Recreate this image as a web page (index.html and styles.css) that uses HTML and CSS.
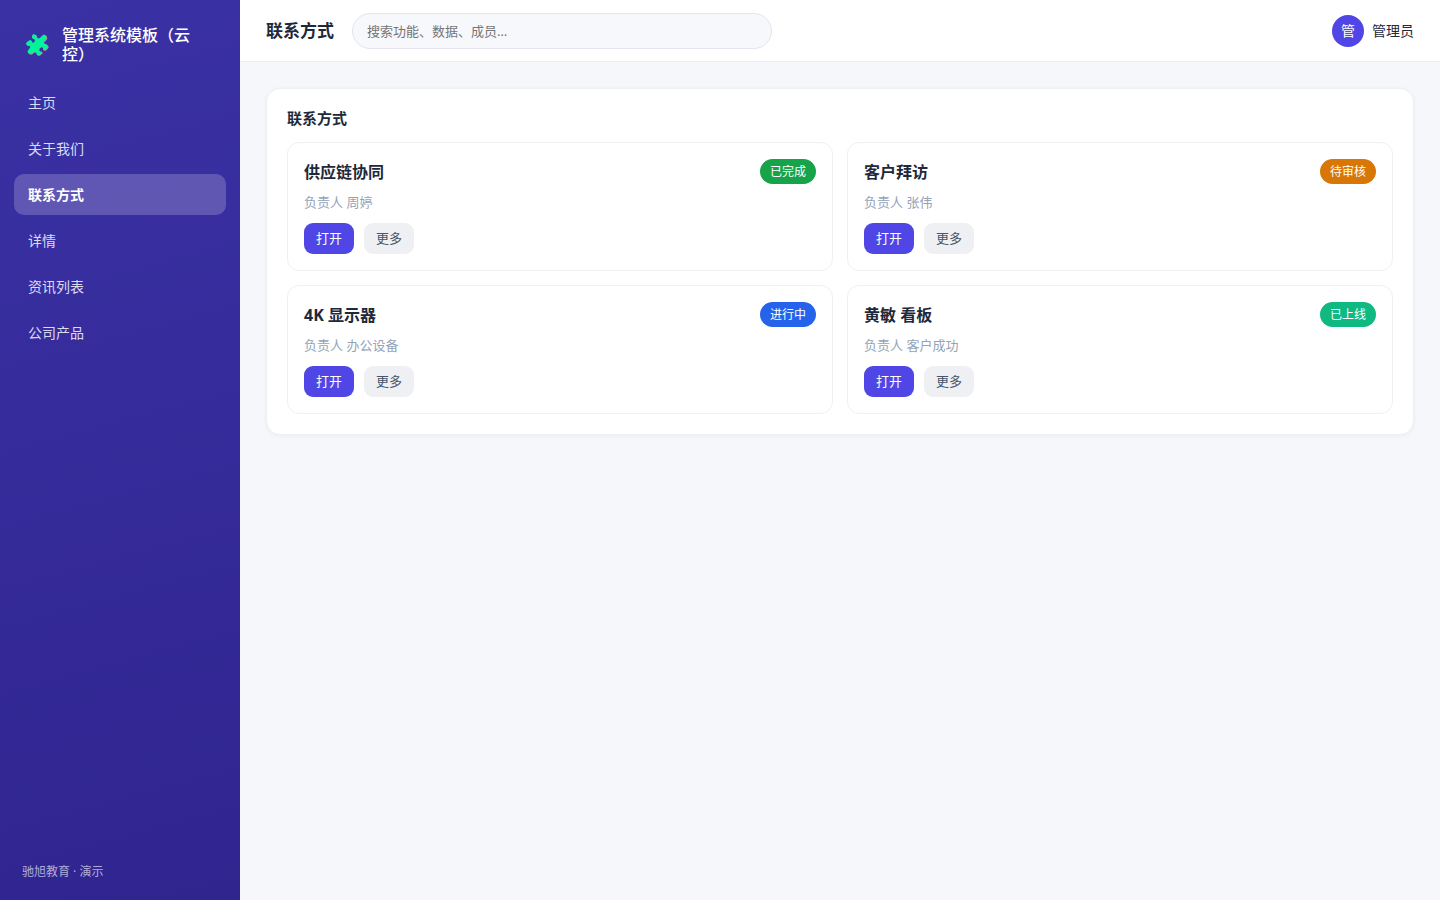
FILE: index.html
```html
<!DOCTYPE html>
<html lang="zh-CN">
<head>
<meta charset="utf-8">
<meta name="viewport" content="width=device-width, initial-scale=1">
<title>联系方式</title>
<link rel="stylesheet" href="styles.css">
</head>
<body>
<div class="app">
  <aside class="sidebar">
    <div class="brand">
      <svg class="brand-icon" viewBox="0 0 24 24" aria-hidden="true">
        <path fill="#b09a8c" transform="translate(.8 .8)" d="M7 2.5 8.5 1 11 2 12 5 14 5.5 17 3 18.5 1.5 21 2.5 21.5 5 20 7 18 9 19 10.500 21 11 23 13 22.500 14.500 20 17 18 17 18 14.500 16 13.500 14 14.500 13.500 17 15 18.500 17 18.500 16.500 20 14 22 12 22 11 19.500 9 18.500 6.500 20.500 5 21 3 20 2.500 18 4.500 15.500 5.500 13.500 4 12.500 1.500 12 1 10 4 7.500 6 7 6.500 9.500 9 9.500 10 8 9.500 6 7 5Z"/>
        <path fill="#00f59b" d="M7 2.5 8.500 1 11 2 12 5 14 5.500 17 3 18.500 1.500 21 2.500 21.500 5 20 7 18 9 19 10.500 21 11 23 13 22.500 14.500 20 17 18 17 18 14.500 16 13.500 14 14.500 13.500 17 15 18.500 17 18.500 16.500 20 14 22 12 22 11 19.500 9 18.500 6.500 20.500 5 21 3 20 2.500 18 4.500 15.500 5.500 13.500 4 12.500 1.500 12 1 10 4 7.500 6 7 6.500 9.500 9 9.500 10 8 9.500 6 7 5Z"/>
      </svg>
      <span class="brand-name">管理系统模板（云控）</span>
    </div>
    <nav class="nav">
      <a href="#">主页</a>
      <a href="#">关于我们</a>
      <a href="#" class="active" aria-current="page">联系方式</a>
      <a href="#">详情</a>
      <a href="#">资讯列表</a>
      <a href="#">公司产品</a>
    </nav>
    <div class="side-foot">驰旭教育 · 演示</div>
  </aside>
  <div class="body">
    <header class="topbar">
      <h1 class="page-title">联系方式</h1>
      <input class="search" type="search" aria-label="搜索" placeholder="搜索功能、数据、成员…">
      <div class="user"><span class="avatar">管</span><span>管理员</span></div>
    </header>
    <main class="main">
      <section class="panel">
        <h2 class="panel-title">联系方式</h2>
        <div class="grid">
          <article class="card">
            <div class="card-head"><h3>供应链协同</h3><span class="badge done">已完成</span></div>
            <p class="owner">负责人 周婷</p>
            <div class="actions"><button class="btn primary">打开</button><button class="btn">更多</button></div>
          </article>
          <article class="card">
            <div class="card-head"><h3>客户拜访</h3><span class="badge review">待审核</span></div>
            <p class="owner">负责人 张伟</p>
            <div class="actions"><button class="btn primary">打开</button><button class="btn">更多</button></div>
          </article>
          <article class="card">
            <div class="card-head"><h3>4K 显示器</h3><span class="badge doing">进行中</span></div>
            <p class="owner">负责人 办公设备</p>
            <div class="actions"><button class="btn primary">打开</button><button class="btn">更多</button></div>
          </article>
          <article class="card">
            <div class="card-head"><h3>黄敏 看板</h3><span class="badge online">已上线</span></div>
            <p class="owner">负责人 客户成功</p>
            <div class="actions"><button class="btn primary">打开</button><button class="btn">更多</button></div>
          </article>
        </div>
      </section>
    </main>
  </div>
</div>
</body>
</html>
```
FILE: styles.css
```css
* { box-sizing: border-box; }
body {
  margin: 0;
  background: #f5f7fb;
  color: #1e293b;
  font: 14px/20px "Noto Sans", "Noto Sans CJK SC", sans-serif;
}
h1, h2, h3, p { margin: 0; }
button, input { font: inherit; }

.app { display: flex; min-height: 100vh; }

.sidebar {
  display: flex;
  flex-direction: column;
  flex: 0 0 240px;
  padding: 22px 14px 18px;
  background: linear-gradient(165deg, #3a31a5, #30258f);
  color: #fff;
}
.brand {
  display: flex;
  align-items: center;
  gap: 12px;
  padding: 4px 22px 18px 10px;
}
.brand-icon { flex: none; width: 26px; height: 24px; }
.brand-name { font-size: 16px; line-height: 19px; font-weight: 500; }
.nav { display: flex; flex-direction: column; gap: 5px; }
.nav a {
  padding: 10px 14px;
  border-radius: 10px;
  line-height: 21px;
  color: #dcdaf3;
  text-decoration: none;
}
.nav a.active {
  background: rgba(255, 255, 255, .2);
  color: #fff;
  font-weight: 700;
}
.side-foot {
  margin-top: auto;
  padding: 0 8px;
  font-size: 12px;
  color: #b0acd8;
}

.body { flex: 1; min-width: 0; }
.topbar {
  display: flex;
  align-items: center;
  gap: 18px;
  min-height: 62px;
  padding: 12px 26px;
  background: #fff;
  border-bottom: 1px solid #eceef3;
}
.page-title { font-size: 17px; line-height: 24px; font-weight: 700; }
.search {
  flex: 0 1 420px;
  min-width: 0;
  height: 36px;
  padding: 0 14px;
  border: 1px solid #e2e5ee;
  border-radius: 18px;
  background: #f7f8fc;
  font-size: 13px;
  appearance: none;
}
.search::placeholder { color: #757575; opacity: 1; }
.user { display: flex; align-items: center; gap: 8px; margin-left: auto; }
.avatar {
  display: grid;
  place-items: center;
  width: 32px;
  height: 32px;
  border-radius: 50%;
  background: #4f46e5;
  color: #fff;
  font-size: 14px;
}

.main { padding: 26px; }
.panel {
  padding: 20px;
  border: 1px solid #eef0f4;
  border-radius: 14px;
  background: #fff;
  box-shadow: 0 1px 4px rgba(30, 41, 59, .05);
}
.panel-title { margin-bottom: 14px; font-size: 15px; line-height: 19px; font-weight: 700; }
.grid { display: grid; grid-template-columns: repeat(2, minmax(0, 1fr)); gap: 14px; }
.card { padding: 16px; border: 1px solid #eef0f4; border-radius: 12px; }
.card-head { display: flex; align-items: center; justify-content: space-between; }
.card h3 { font-size: 16px; line-height: 24px; font-weight: 700; }
.badge {
  padding: 3px 10px;
  border-radius: 13px;
  color: #fff;
  font-size: 12px;
  line-height: 19px;
}
.done { background: #16a34a; }
.review { background: #d97706; }
.doing { background: #2563eb; }
.online { background: #10b981; }
.owner { margin: 8px 0 11px; font-size: 13px; line-height: 20px; color: #94a3b8; }
.actions { display: flex; gap: 10px; }
.btn {
  padding: 5px 12px;
  border: 0;
  border-radius: 9px;
  background: #eef0f4;
  color: #475569;
  font-size: 13px;
  line-height: 21px;
}
.btn.primary { background: #4f46e5; color: #fff; }
```
